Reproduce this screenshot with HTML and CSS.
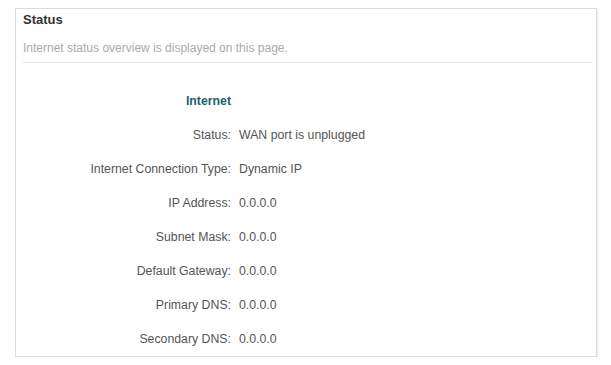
FILE: index.html
```html
<!DOCTYPE html>
<html lang="en">
<head>
    <meta charset="UTF-8">
    <meta name="viewport" content="width=device-width, initial-scale=1.0">
    <title>Status</title>
    <link rel="stylesheet" href="styles.css">
</head>
<body>
    <div class="panel">
        <div class="panel-head">
            <h1>Status</h1>
            <p class="desc">Internet status overview is displayed on this page.</p>
        </div>
        <div class="info">
            <div class="label section">Internet</div>
            <div></div>
            <div class="label">Status:</div>
            <div class="value">WAN port is unplugged</div>
            <div class="label">Internet Connection Type:</div>
            <div class="value">Dynamic IP</div>
            <div class="label">IP Address:</div>
            <div class="value">0.0.0.0</div>
            <div class="label">Subnet Mask:</div>
            <div class="value">0.0.0.0</div>
            <div class="label">Default Gateway:</div>
            <div class="value">0.0.0.0</div>
            <div class="label">Primary DNS:</div>
            <div class="value">0.0.0.0</div>
            <div class="label">Secondary DNS:</div>
            <div class="value">0.0.0.0</div>
        </div>
    </div>
</body>
</html>
```
FILE: styles.css
```css
body {
    font-family: "Liberation Sans", Arial, sans-serif;
    font-size: 12px;
    color: #555;
    margin: 0;
    padding: 8px 14px 0 15px;
    background: #fff;
}
.panel {
    border: 1px solid #dcdcdc;
    box-shadow: 1px 1px 1px #eee;
    height: 349px;
    box-sizing: border-box;
}
.panel-head {
    margin: 0 4px 0 7px;
    border-bottom: 1px solid #e6e6e6;
    padding-bottom: 5px;
}
h1 {
    font-size: 13px;
    font-weight: bold;
    color: #333;
    margin: 0;
    line-height: 22px;
}
.desc {
    color: #aaa;
    margin: 8px 0 0;
    line-height: 18px;
}
.info {
    display: grid;
    grid-template-columns: 215px 1fr;
    grid-auto-rows: 34px;
    column-gap: 8px;
    align-items: center;
    padding-top: 21px;
    font-size: 12.3px;
}
.label {
    text-align: right;
}
.section {
    font-weight: bold;
    color: #1b5f6e;
    text-align: right;
}
.value {
    color: #555;
}
```
